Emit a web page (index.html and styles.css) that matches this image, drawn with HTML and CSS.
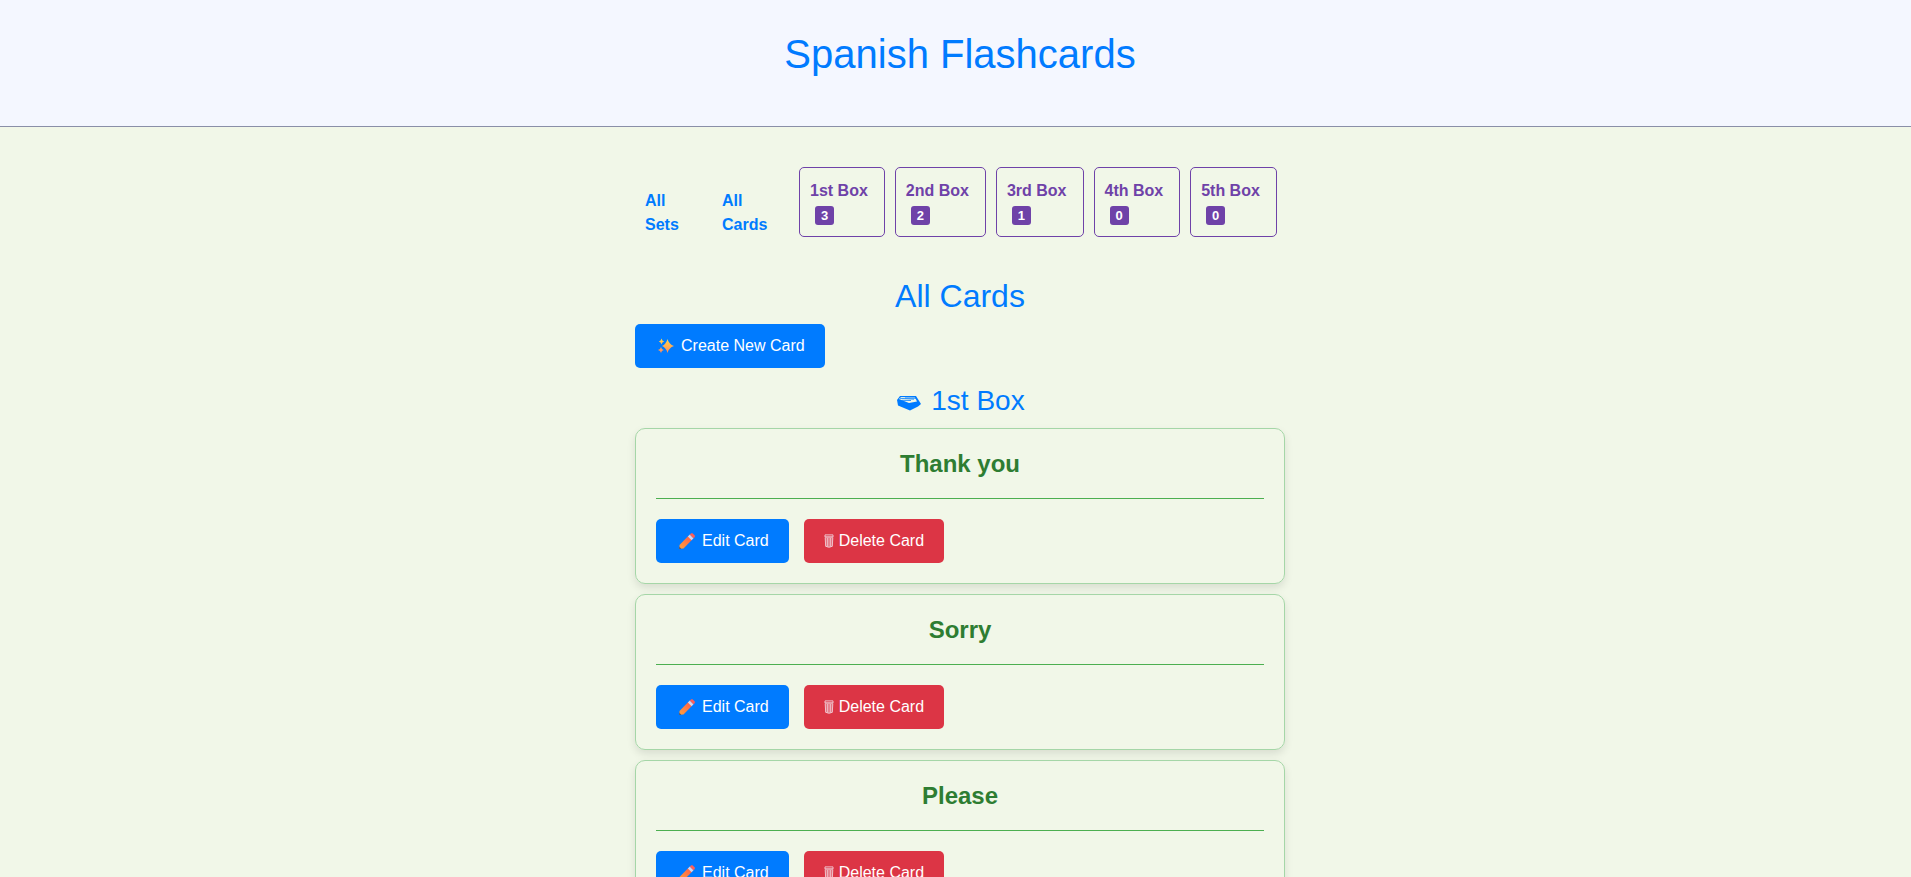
FILE: index.html
```html
<!DOCTYPE html>
<html lang="en">
<head>
<meta charset="utf-8">
<title>Spanish Flashcards</title>
<link rel="stylesheet" href="styles.css">
</head>
<body>
<svg class="sprite" aria-hidden="true">
  <defs>
    <linearGradient id="gold" x1="0" y1="0" x2="0" y2="1"><stop offset="0" stop-color="#ffd84d"/><stop offset="1" stop-color="#ff8a5c"/></linearGradient>
    <linearGradient id="wood" x1="1" y1="0" x2="0" y2="1"><stop offset="0" stop-color="#ff5a4a"/><stop offset="1" stop-color="#ffa23c"/></linearGradient>
    <symbol id="sparkles" viewBox="0 0 16 16">
      <path fill="url(#gold)" d="M9.500 1Q10.800 6.200 16 8Q10.800 9.800 9.500 15Q8.200 9.800 4 8Q8.200 6.200 9.500 1ZM3.500 .6Q4 3 6.200 3.500Q4 4 3.500 6.400Q3 4 .8 3.500Q3 3 3.500 .6ZM3 9Q3.500 11.500 5.800 12Q3.500 12.500 3 15Q2.500 12.500 0 12Q2.500 11.500 3 9Z"/>
    </symbol>
    <symbol id="pencil" viewBox="0 0 16 16">
      <path fill="url(#wood)" d="M0.500 12L9 3.200L12.800 7L4.500 15.500L0.500 15.800Z"/>
      <path fill="#d8d4e8" d="M8.800 3.400L10.800 1.600L14.500 5.300L12.600 7.200Z"/>
      <path fill="#ff5f58" d="M10.800 1.600L12.300 0.300H13.500L15.800 2.600V4L14.500 5.300Z"/>
      <path fill="#5b4650" d="M0.400 13.800L2.300 15.700L0.300 16Z"/>
    </symbol>
    <symbol id="bin" viewBox="0 0 10 14">
      <path fill="#eec0ca" fill-opacity=".45" d="M1 2H9L8.500 12.500Q5 14.500 1.500 12.500Z"/>
      <path fill="none" stroke="#efc3cc" d="M1 .9H9V3H1ZM1.200 3.500L1.700 12.300Q5 14 8.300 12.300L8.800 3.500M3.700 4V12.500M6.300 4V12.500"/>
    </symbol>
    <symbol id="tray" viewBox="0 0 24 16">
      <path fill="#007bff" fill-rule="evenodd" d="M3 1H19L24 9L21 11.500L13 15.500L1 10.500L0 5ZM2 4L12 8L20 6.500L18 2.500L4 2Z"/>
      <path fill="none" stroke="#007bff" stroke-width=".8" d="M3 3.300L17 4.200M5 5.300L14 5.500M8 3L19 3.300"/>
    </symbol>
  </defs>
</svg>
<header class="site-header"><h1>Spanish Flashcards</h1></header>
<main class="page">
  <nav class="nav">
    <a class="nav-link nav-sets" href="#sets">All Sets</a>
    <a class="nav-link nav-cards" href="#cards">All Cards</a>
    <a class="box-link" href="#box1">1st Box <span class="badge">3</span></a>
    <a class="box-link" href="#box2">2nd Box <span class="badge">2</span></a>
    <a class="box-link" href="#box3">3rd Box <span class="badge">1</span></a>
    <a class="box-link" href="#box4">4th Box <span class="badge">0</span></a>
    <a class="box-link" href="#box5">5th Box <span class="badge">0</span></a>
  </nav>
  <h2>All Cards</h2>
  <button class="btn" type="button"><svg class="icon"><use href="#sparkles"/></svg>Create New Card</button>
  <h3 id="box1"><svg class="tray"><use href="#tray"/></svg>1st Box</h3>
  <article class="card">
    <h4>Thank you</h4>
    <div class="actions">
      <button class="btn" type="button"><svg class="icon"><use href="#pencil"/></svg>Edit Card</button>
      <button class="btn danger" type="button"><svg class="bin"><use href="#bin"/></svg>Delete Card</button>
    </div>
  </article>
  <article class="card">
    <h4>Sorry</h4>
    <div class="actions">
      <button class="btn" type="button"><svg class="icon"><use href="#pencil"/></svg>Edit Card</button>
      <button class="btn danger" type="button"><svg class="bin"><use href="#bin"/></svg>Delete Card</button>
    </div>
  </article>
  <article class="card">
    <h4>Please</h4>
    <div class="actions">
      <button class="btn" type="button"><svg class="icon"><use href="#pencil"/></svg>Edit Card</button>
      <button class="btn danger" type="button"><svg class="bin"><use href="#bin"/></svg>Delete Card</button>
    </div>
  </article>
</main>
</body>
</html>
```
FILE: styles.css
```css
* { box-sizing: border-box; }
html { scrollbar-width: none; }
body {
  margin: 0;
  background: #f1f7e8;
  color: #007bff;
  font: 16px/24px "Liberation Sans", Arial, sans-serif;
}
.sprite { position: absolute; width: 0; height: 0; }
h1, h2, h3, h4 { margin: 0; font-weight: 400; text-align: center; }
.site-header {
  padding: 30px 0 48px 9px;
  background: #f4f7ff;
  border-bottom: 1px solid #8a8fa8;
}
h1 { font-size: 40px; line-height: 48px; }
.page {
  max-width: 659px;
  margin: 0 auto;
  padding: 40px 0 40px 9px;
}
.nav { display: flex; gap: 10px; margin-bottom: 40px; }
.nav a { text-decoration: none; font-weight: 700; }
.nav-link { padding: 22px 10px 0; color: #007bff; }
.nav-sets { width: 67px; }
.nav-cards { width: 77px; }
.box-link {
  padding: 11px 16px 9px 10px;
  border: 1px solid #6f42a8;
  border-radius: 5px;
  color: #6f42a8;
}
.badge {
  display: block;
  width: 19px;
  margin: 3px 0 2px 5px;
  border-radius: 3px;
  background: #6f42a8;
  color: #fff;
  font-size: 13px;
  line-height: 19px;
  text-align: center;
}
h2 { margin-bottom: 8px; font-size: 32px; line-height: 39px; }
.btn {
  display: inline-flex;
  align-items: center;
  padding: 10px 20px;
  border: 0;
  border-radius: 5px;
  background: #007bff;
  color: #fff;
  font: inherit;
}
.danger { background: #dc3545; }
.icon { width: 16px; height: 16px; margin: 0 7px 0 3px; }
.bin { width: 10px; height: 14px; margin-right: 5px; }
h3 {
  display: flex;
  align-items: center;
  justify-content: center;
  margin: 16px 0 10px;
  font-size: 28px;
  line-height: 34px;
}
.tray { width: 24px; height: 16px; margin: 3px 10px 0 2px; }
.card {
  margin-bottom: 10px;
  padding: 20px;
  border: 1px solid #a5d6a7;
  border-radius: 10px;
  box-shadow: 0 4px 8px rgba(0, 0, 0, .1);
}
h4 {
  margin-bottom: 20px;
  padding-bottom: 20px;
  border-bottom: 1px solid #4caf50;
  color: #2e7d32;
  font-size: 24px;
  font-weight: 700;
  line-height: 29px;
}
.actions { display: flex; gap: 15px; }
```
